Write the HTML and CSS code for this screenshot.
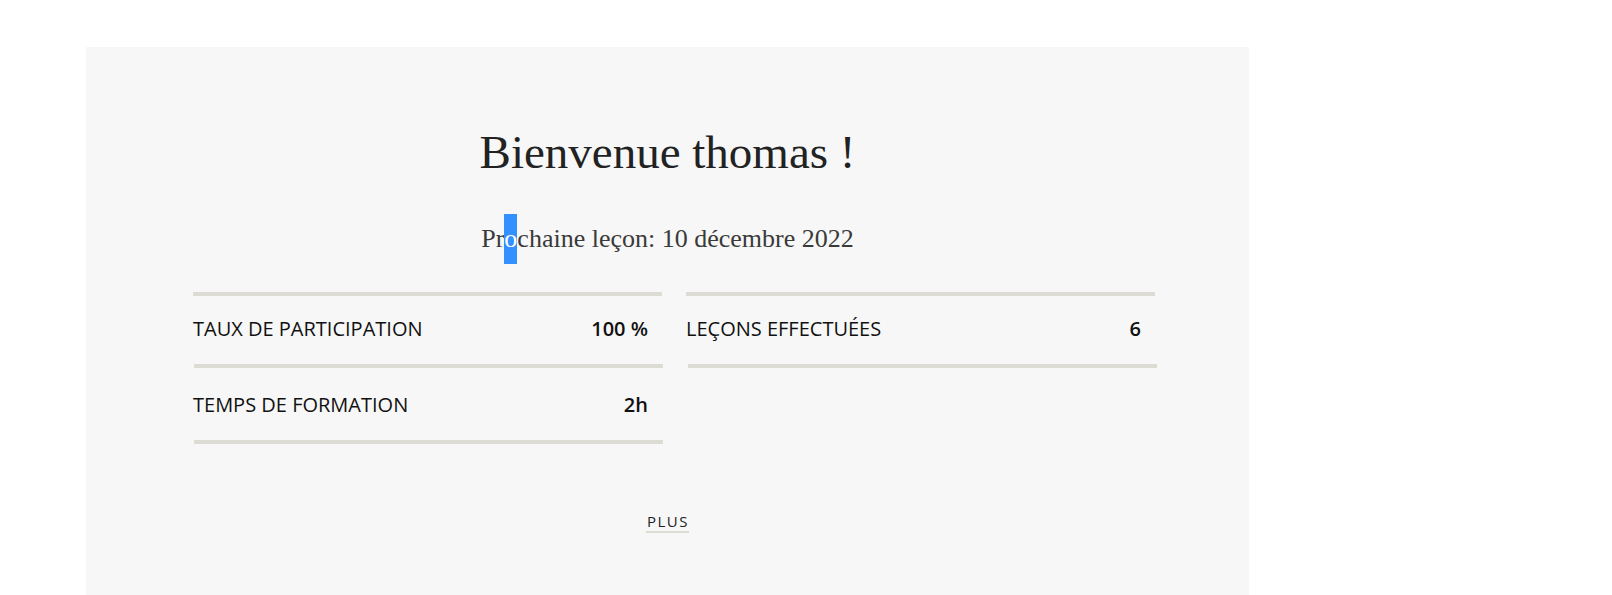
FILE: index.html
```html
<!DOCTYPE html>
<html lang="fr">
<head>
<meta charset="utf-8">
<title>Accueil</title>
<link rel="stylesheet" href="styles.css">
</head>
<body>
<main class="panel">
  <h1 class="title">Bienvenue thomas !</h1>
  <p class="subtitle">Pr<span class="sel">o</span>chaine leçon: 10 décembre 2022</p>
  <section class="stats">
    <div class="col">
      <div class="rule"></div>
      <div class="row row-a"><span class="label">TAUX DE PARTICIPATION</span><span class="value">100 %</span></div>
      <div class="rule shift"></div>
      <div class="row row-b"><span class="label">TEMPS DE FORMATION</span><span class="value">2h</span></div>
      <div class="rule shift"></div>
    </div>
    <div class="col">
      <div class="rule"></div>
      <div class="row row-a"><span class="label">LEÇONS EFFECTUÉES</span><span class="value">6</span></div>
      <div class="rule shift2"></div>
    </div>
  </section>
  <div class="more"><a class="more-link">PLUS</a></div>
</main>
</body>
</html>
```
FILE: styles.css
```css
html, body {
  margin: 0;
  padding: 0;
  background: #ffffff;
}
.panel {
  margin: 47px 0 0 86px;
  width: 1163px;
  height: 548px;
  background: #f7f7f7;
  box-sizing: border-box;
  padding-top: 70px;
  overflow: hidden;
}
.title {
  margin: 0;
  font-family: "Liberation Serif", serif;
  font-weight: normal;
  font-size: 47px;
  line-height: 70px;
  color: #222222;
  text-align: center;
}
.subtitle {
  margin: 27px 0 0 0;
  font-family: "Liberation Serif", serif;
  font-size: 26px;
  line-height: 50px;
  color: #3a3a3a;
  text-align: center;
}
.sel {
  display: inline-block;
  background: #3390ff;
  color: #ffffff;
  line-height: 50px;
  vertical-align: top;
}
.stats {
  display: grid;
  grid-template-columns: 469px 469px;
  column-gap: 24px;
  margin: 28px 0 0 107px;
  align-items: start;
}
.rule {
  height: 4px;
  background: #dcdcd5;
}
.rule.shift {
  margin-left: 1px;
  margin-right: -1px;
}
.rule.shift2 {
  margin-left: 2px;
  margin-right: -2px;
}
.row {
  display: flex;
  justify-content: space-between;
  align-items: center;
  padding-right: 14px;
  font-family: "Open Sans", sans-serif;
  font-size: 20px;
  color: #111111;
  box-sizing: border-box;
}
.row-a { height: 68px; padding-bottom: 3px; }
.row-b { height: 72px; }
.value {
  font-weight: 600;
}
.more {
  text-align: center;
  margin-top: 68px;
}
.more-link {
  display: inline-block;
  font-family: "Open Sans", sans-serif;
  font-size: 15px;
  letter-spacing: 1.5px;
  color: #222222;
  line-height: 19px;
  border-bottom: 2px solid #dcdcd5;
  padding-left: 1px;
}
```
